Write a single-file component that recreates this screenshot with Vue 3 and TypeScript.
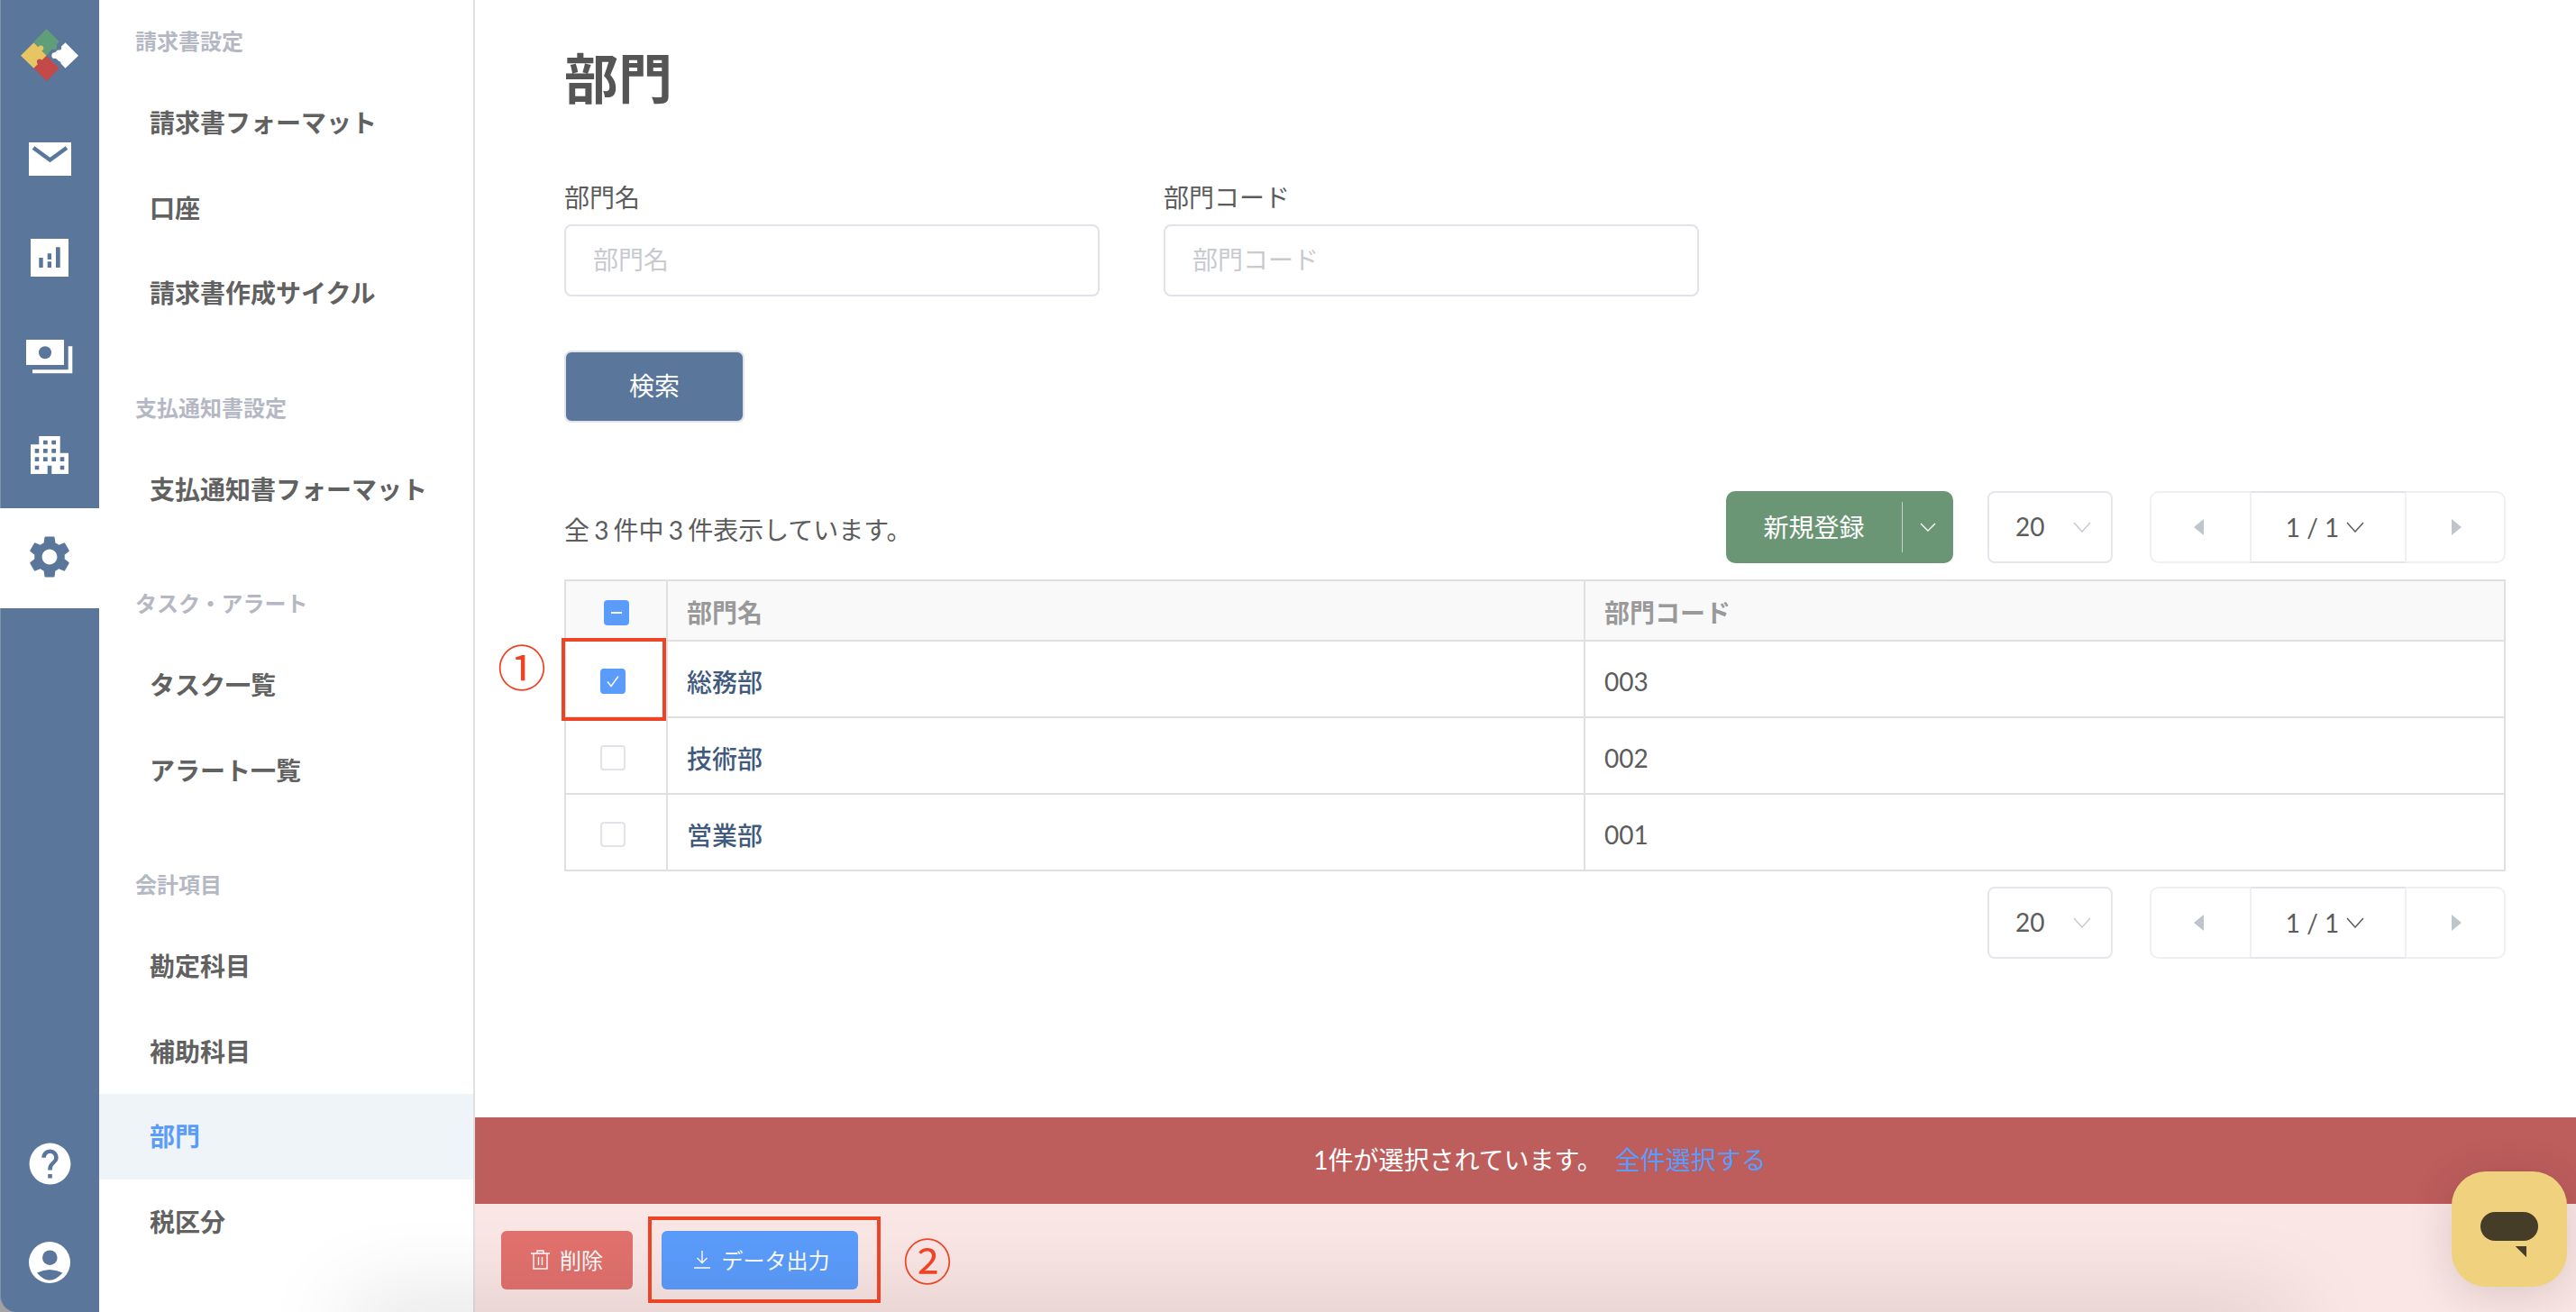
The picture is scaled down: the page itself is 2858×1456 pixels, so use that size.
<template>
  <div class="page">
    <aside class="rail">
      <div class="logo">
        <svg width="64" height="58" viewBox="0 0 190 172">
          <polygon points="85,0 127,42 110,59 85,88 43,42" fill="#5f9e78" />
          <circle cx="112" cy="60" r="9" fill="#5f9e78" />
          <polygon points="0,88 43,45 85,88 43,130" fill="#e8c563" />
          <circle cx="66" cy="64" r="9" fill="#e8c563" />
          <polygon points="85,172 127,130 85,88 43,130" fill="#c44a4a" />
          <circle cx="62" cy="108" r="9" fill="#c44a4a" />
          <polygon points="105,85 147,45 190,88 147,130" fill="#fff" />
          <circle cx="112" cy="88" r="10" fill="#fff" />
          <circle cx="126" cy="62" r="8" fill="#5a769b" />
          <circle cx="124" cy="114" r="8" fill="#5a769b" />
        </svg>
      </div>
      <a class="rail-item">
        <svg width="47" height="37" viewBox="0 0 47 37">
          <rect width="47" height="37" fill="#fff" />
          <polyline points="5,6 23.5,19.5 42,6" fill="none" stroke="#5a769b" stroke-width="4.5" />
        </svg>
      </a>
      <a class="rail-item">
        <svg width="42" height="42" viewBox="0 0 42 42">
          <rect width="42" height="42" fill="#fff" />
          <path d="M9.3 21h4.4v11H9.3zM18.7 16.3H23V23h-4.3zM18.7 25.3H23V32h-4.3zM28 9.3h4.7V32H28z" fill="#5a769b" />
        </svg>
      </a>
      <a class="rail-item">
        <svg width="52" height="38" viewBox="0 0 52 38">
          <rect width="42" height="28" fill="#fff" />
          <circle cx="21" cy="14.3" r="7" fill="#5a769b" />
          <path d="M46.7 7.3h4.6v30H7v-4h39.7z" fill="#fff" />
        </svg>
      </a>
      <a class="rail-item building">
        <svg width="42" height="42" viewBox="0 0 42 42">
          <path d="M9.3 0h23.4v18.7H42V42H23.3v-9.3h-4.6V42H0V9.3h9.3z" fill="#fff" />
          <path
            d="M14 4.7h4.7v4.6H14zM23.3 4.7H28v4.6h-4.7zM4.7 14h4.6v4.7H4.7zM14 14h4.7v4.7H14zM23.3 14H28v4.7h-4.7zM4.7 23.3h4.6V28H4.7zM14 23.3h4.7V28H14zM23.3 23.3H28V28h-4.7zM32.7 23.3h4.6V28h-4.6zM4.7 32.7h4.6v4.6H4.7zM32.7 32.7h4.6v4.6h-4.6z"
            fill="#5a769b"
          />
        </svg>
      </a>
      <a class="rail-item active">
        <svg width="56" height="56" viewBox="0 0 24 24">
          <path
            d="M19.14 12.94c.04-.3.06-.61.06-.94 0-.32-.02-.64-.07-.94l2.03-1.58a.49.49 0 0 0 .12-.61l-1.92-3.32a.488.488 0 0 0-.59-.22l-2.39.96c-.5-.38-1.03-.7-1.62-.94l-.36-2.54a.484.484 0 0 0-.48-.41h-3.84c-.24 0-.43.17-.47.41l-.36 2.54c-.59.24-1.13.57-1.62.94l-2.39-.96c-.22-.08-.47 0-.59.22L2.74 8.87c-.12.21-.08.47.12.61l2.03 1.58c-.05.3-.09.63-.09.94s.02.64.07.94l-2.03 1.58a.49.49 0 0 0-.12.61l1.92 3.32c.12.22.37.29.59.22l2.39-.96c.5.38 1.03.7 1.62.94l.36 2.54c.05.24.24.41.48.41h3.84c.24 0 .44-.17.47-.41l.36-2.54c.59-.24 1.13-.56 1.62-.94l2.39.96c.22.08.47 0 .59-.22l1.92-3.32c.12-.22.07-.47-.12-.61l-2.01-1.58zM12 15.6c-1.98 0-3.6-1.62-3.6-3.6s1.62-3.6 3.6-3.6 3.6 1.62 3.6 3.6-1.62 3.6-3.6 3.6z"
            fill="#5a769b"
          />
        </svg>
      </a>
      <div class="rail-bottom">
        <a class="rail-item">
          <svg width="55" height="55" viewBox="0 0 24 24">
            <path
              d="M12 2C6.48 2 2 6.48 2 12s4.48 10 10 10 10-4.48 10-10S17.52 2 12 2zm1 17h-2v-2h2v2zm2.07-7.75l-.9.92C13.45 12.9 13 13.5 13 15h-2v-.5c0-1.1.45-2.1 1.17-2.83l1.24-1.26c.37-.36.59-.86.59-1.41 0-1.1-.9-2-2-2s-2 .9-2 2H8c0-2.21 1.79-4 4-4s4 1.79 4 4c0 .88-.36 1.68-.93 2.25z"
              fill="#fff"
            />
          </svg>
        </a>
        <a class="rail-item">
          <svg width="46" height="46" viewBox="0 0 46 46">
            <circle cx="23" cy="23" r="23" fill="#fff" />
            <circle cx="23.3" cy="17.7" r="8.3" fill="#5a769b" />
            <path d="M9 34.5Q23 27.5 37.5 34.5Q30 42.7 23 42.7Q16 42.7 9 34.5Z" fill="#5a769b" />
          </svg>
        </a>
      </div>
    </aside>

    <nav class="subnav">
      <section v-for="group in navGroups" :key="group.label" class="nav-group">
        <h3>{{ group.label }}</h3>
        <a
          v-for="item in group.items"
          :key="item"
          class="nav-item"
          :class="{ current: item === '部門' }"
        >{{ item }}</a>
      </section>
    </nav>

    <main class="main">
      <div class="content">
        <h1>部門</h1>
        <div class="fields">
          <label class="field">
            <span>部門名</span>
            <input type="text" placeholder="部門名" />
          </label>
          <label class="field">
            <span>部門コード</span>
            <input type="text" placeholder="部門コード" />
          </label>
        </div>
        <button class="search">検索</button>

        <div class="toolbar">
          <p class="count">全 3 件中 3 件表示しています。</p>
          <button class="new-btn">
            <span class="new-label">新規登録</span>
            <span class="new-caret">
              <svg width="18" height="10" viewBox="0 0 18 10">
                <polyline points="1,1 9,9 17,1" fill="none" stroke="#fff" stroke-width="1.4" />
              </svg>
            </span>
          </button>
          <div class="per-page">
            <span>20</span>
            <svg width="20" height="12" viewBox="0 0 20 12">
              <polyline points="1,1 10,11 19,1" fill="none" stroke="#c8cad0" stroke-width="1.5" />
            </svg>
          </div>
          <div class="pager">
            <span class="pager-arrow"><i class="tri left"></i></span>
            <span class="pager-mid">
              1 / 1
              <svg width="20" height="12" viewBox="0 0 20 12">
                <polyline points="1,1 10,11 19,1" fill="none" stroke="#5c5c5c" stroke-width="1.5" />
              </svg>
            </span>
            <span class="pager-arrow"><i class="tri right"></i></span>
          </div>
        </div>

        <table class="grid">
          <thead>
            <tr>
              <th class="check-col"><span class="check on head"><i class="dash"></i></span></th>
              <th class="name-col">部門名</th>
              <th>部門コード</th>
            </tr>
          </thead>
          <tbody>
            <tr v-for="row in rows" :key="row.code">
              <td class="check-col">
                <span class="check" :class="{ on: row.checked }">
                  <svg v-if="row.checked" width="16" height="16" viewBox="0 0 16 16">
                    <polyline points="2,8.5 6,13.5 14,2.5" fill="none" stroke="#fff" stroke-width="1.5" />
                  </svg>
                </span>
              </td>
              <td class="name">{{ row.name }}</td>
              <td class="code">{{ row.code }}</td>
            </tr>
          </tbody>
        </table>

        <div class="toolbar bottom">
          <div class="per-page">
            <span>20</span>
            <svg width="20" height="12" viewBox="0 0 20 12">
              <polyline points="1,1 10,11 19,1" fill="none" stroke="#c8cad0" stroke-width="1.5" />
            </svg>
          </div>
          <div class="pager">
            <span class="pager-arrow"><i class="tri left"></i></span>
            <span class="pager-mid">
              1 / 1
              <svg width="20" height="12" viewBox="0 0 20 12">
                <polyline points="1,1 10,11 19,1" fill="none" stroke="#5c5c5c" stroke-width="1.5" />
              </svg>
            </span>
            <span class="pager-arrow"><i class="tri right"></i></span>
          </div>
        </div>
      </div>

      <div class="selected-bar">
        <span>1件が選択されています。</span>
        <a>全件選択する</a>
      </div>
      <div class="actions">
        <button class="act delete">
          <svg width="21" height="22" viewBox="0 0 21 22" fill="none" stroke="#fff" stroke-width="1.4">
            <path d="M0 4h21M7 4V1h7v3M3 4v17h15V4M8.5 8v9M12.5 8v9" />
          </svg>
          削除
        </button>
        <button class="act export">
          <svg width="18" height="20" viewBox="0 0 18 20" fill="none" stroke="#fff" stroke-width="1.4">
            <path d="M9 0v13M3.5 8L9 13.5 14.5 8M0 19h18" />
          </svg>
          データ出力
        </button>
      </div>
    </main>

    <div class="window-shadow"></div>

    <div class="mark box-one"></div>
    <div class="mark box-two"></div>
    <span class="mark-num num-one">①</span>
    <span class="mark-num num-two">②</span>

    <button class="chat">
      <svg width="64" height="51" viewBox="0 0 64 51">
        <rect width="64" height="32" rx="16" fill="#463d29" />
        <polygon points="38.7,38 51,38 51,50.3" fill="#463d29" />
      </svg>
    </button>
  </div>
</template>

<script setup lang="ts">
const navGroups = [
  { label: "請求書設定", items: ["請求書フォーマット", "口座", "請求書作成サイクル"] },
  { label: "支払通知書設定", items: ["支払通知書フォーマット"] },
  { label: "タスク・アラート", items: ["タスク一覧", "アラート一覧"] },
  { label: "会計項目", items: ["勘定科目", "補助科目", "部門", "税区分"] },
];

const rows = [
  { name: "総務部", code: "003", checked: true },
  { name: "技術部", code: "002", checked: false },
  { name: "営業部", code: "001", checked: false },
];
</script>

<style>
html,
body {
  margin: 0;
  background: #fff;
}
</style>

<style scoped>
.page {
  position: relative;
  display: flex;
  width: 2858px;
  height: 1456px;
  overflow: hidden;
  background: #a3a3a3;
  font-family: Lato, "Noto Sans CJK JP", sans-serif;
  font-size: 28px;
  color: #5c5c5c;
}

.rail {
  display: flex;
  flex-direction: column;
  flex: 0 0 110px;
  box-sizing: border-box;
  border-left: 1px solid #7f93ad;
  border-bottom-left-radius: 18px;
  background: #5a769b;
}
.logo {
  display: flex;
  justify-content: center;
  align-items: center;
  height: 121px;
  margin-left: -1px;
}
.rail-item {
  display: flex;
  justify-content: center;
  align-items: center;
  height: 110px;
  margin-left: -1px;
}
.rail-item.building {
  padding-bottom: 2px;
  height: 108px;
}
.rail-item.active {
  height: 107px;
  margin-top: 3px;
  padding-bottom: 4px;
  background: #fff;
}
.rail-bottom {
  margin-top: auto;
}

.subnav {
  flex: 0 0 415px;
  padding-top: 2px;
  background: #fff;
  border-right: 2px solid #e0e0e0;
}
.nav-group {
  margin-bottom: 35.6px;
}
.nav-group h3 {
  display: flex;
  align-items: center;
  height: 87px;
  margin: 0;
  padding: 0 0 0 40px;
  box-sizing: border-box;
  font-size: 24px;
  line-height: 87px;
  font-weight: 700;
  color: #b5b8c4;
}
.nav-item {
  display: block;
  height: 94.7px;
  padding-left: 56px;
  font-weight: 700;
  line-height: 94.7px;
  color: #616161;
}
.nav-item.current {
  background: #eff4f9;
  color: #5b9cfb;
}

.main {
  display: flex;
  flex-direction: column;
  flex: 1;
  min-width: 0;
  background: #fff;
}
.content {
  flex: 1;
  padding: 47px 78px 0 99px;
}
h1 {
  height: 80px;
  margin: 0 0 72px;
  font-size: 60px;
  line-height: 80px;
  font-weight: 700;
  color: #555;
}
.fields {
  display: flex;
  gap: 71px;
}
.field {
  display: flex;
  flex-direction: column;
  gap: 10px;
  width: 594px;
  line-height: 40px;
}
.field input {
  height: 80px;
  padding: 0 30px 3px;
  box-sizing: border-box;
  border: 2px solid #e2e2ea;
  border-radius: 8px;
  outline: none;
  font: inherit;
  color: #5c5c5c;
}
.field input::placeholder {
  color: #c8cad0;
}
.search {
  display: block;
  width: 200px;
  height: 80px;
  margin-top: 60px;
  padding: 0 0 5px;
  border: 2px solid #e2e2ea;
  border-radius: 8px;
  background: #5a769b;
  font: inherit;
  color: #fff;
}

.toolbar {
  display: flex;
  align-items: center;
  height: 80px;
  margin-top: 76px;
}
.toolbar.bottom {
  justify-content: flex-end;
  margin-top: 17px;
}
.count {
  margin: 4px auto 0 0;
  word-spacing: -2px;
}
.new-btn {
  display: flex;
  align-items: center;
  width: 252px;
  height: 80px;
  margin-right: 38px;
  padding: 0;
  border: 0;
  border-radius: 10px;
  background: #6b9675;
  font: inherit;
  color: #fff;
}
.new-label {
  flex: 1;
  padding-bottom: 3px;
  text-align: center;
}
.new-caret {
  display: flex;
  justify-content: center;
  align-items: center;
  width: 56px;
  height: 56px;
  border-left: 1px solid #c5d6c9;
}
.per-page {
  display: flex;
  justify-content: space-between;
  align-items: center;
  width: 139px;
  height: 80px;
  box-sizing: border-box;
  margin-right: 41px;
  padding: 0 22px 0 29px;
  border: 2px solid #e6e6ec;
  border-radius: 8px;
}
.per-page span {
  padding-bottom: 3px;
}
.pager {
  display: flex;
  width: 395px;
  height: 80px;
  box-sizing: border-box;
  border: 2px solid #f0f0f4;
  border-radius: 10px;
}
.pager-arrow {
  display: flex;
  flex: 1;
  justify-content: center;
  align-items: center;
}
.pager-mid {
  display: flex;
  justify-content: center;
  align-items: center;
  gap: 8px;
  width: 174px;
  margin: -2px 0;
  padding-right: 6px;
  border: 2px solid #e6e6ec;
  border-top-color: #e2e2e8;
  border-left-color: #f0f0f4;
  border-right-color: #f0f0f4;
  box-sizing: border-box;
}
.tri {
  width: 0;
  height: 0;
  border-top: 9px solid transparent;
  border-bottom: 9px solid transparent;
}
.tri.left {
  margin-right: 3px;
  border-right: 11px solid #c0c4cc;
}
.tri.right {
  margin-left: 4px;
  border-left: 11px solid #c0c4cc;
}

.grid {
  width: 100%;
  margin-top: 18px;
  table-layout: fixed;
  border-collapse: collapse;
}
.grid th,
.grid td {
  padding: 4px 0 0 21px;
  border: 2px solid #e0e0e0;
  text-align: left;
  line-height: 40px;
}
.grid th {
  height: 61px;
  background: #f9f9f9;
  font-weight: 700;
  color: #999;
}
.grid td {
  height: 77px;
}
.grid .check-col {
  width: 111px;
  padding-left: 0;
  text-align: center;
}
.grid .name-col {
  width: 995px;
}
.grid .name {
  padding-top: 6px;
  font-weight: 500;
  color: #3f5a7d;
}
.check {
  display: inline-flex;
  justify-content: center;
  align-items: center;
  width: 28px;
  height: 28px;
  margin: 6px 7px 0 0;
  box-sizing: border-box;
  border: 2px solid #e2e2ea;
  border-radius: 4px;
  vertical-align: top;
}
.check.on {
  border: 0;
  background: #5b9cfb;
}
.check.head {
  margin-right: 0;
}
.dash {
  width: 12px;
  height: 2px;
  background: #fff;
}

.selected-bar {
  display: flex;
  justify-content: center;
  align-items: center;
  gap: 14px;
  height: 96px;
  padding: 0 0 5px 32px;
  box-sizing: border-box;
  background: #bd5d5c;
  color: #fff;
}
.selected-bar a {
  color: #5b9cfb;
}
.actions {
  display: flex;
  align-items: flex-start;
  gap: 32px;
  height: 120px;
  box-sizing: border-box;
  padding: 30px 0 0 29px;
  background: #fae6e5;
}
.act {
  display: flex;
  justify-content: center;
  align-items: center;
  gap: 11px;
  height: 65px;
  padding: 0 0 2px;
  border: 0;
  border-radius: 6px;
  font: inherit;
  font-size: 24px;
  color: #fff;
}
.delete {
  width: 146px;
  background: #e2716d;
}
.export {
  gap: 13px;
  width: 218px;
  padding-left: 4px;
  background: #5b9cfb;
}

.window-shadow {
  position: absolute;
  left: 390px;
  right: 320px;
  top: 1456px;
  height: 40px;
  box-shadow: 0 0 100px rgba(0, 0, 0, 0.22);
  pointer-events: none;
}

.mark {
  position: absolute;
  box-sizing: border-box;
  border: 4px solid #ee4426;
}
.box-one {
  left: 623px;
  top: 708px;
  width: 116px;
  height: 92px;
}
.box-two {
  left: 719px;
  top: 1350px;
  width: 258px;
  height: 96px;
}
.mark-num {
  position: absolute;
  width: 60px;
  font-size: 54px;
  line-height: 60px;
  text-align: center;
  font-family: "Noto Sans CJK JP", sans-serif;
  color: #ee4426;
}
.num-one {
  left: 549px;
  top: 709px;
}
.num-two {
  left: 999px;
  top: 1368px;
}

.chat {
  position: absolute;
  left: 2720px;
  top: 1300px;
  display: flex;
  justify-content: center;
  align-items: flex-start;
  width: 128px;
  height: 128px;
  padding: 45px 0 0;
  border: 0;
  border-radius: 38px;
  background: #f0d27e;
  box-shadow: 0 8px 50px rgba(0, 0, 0, 0.14);
}
</style>
